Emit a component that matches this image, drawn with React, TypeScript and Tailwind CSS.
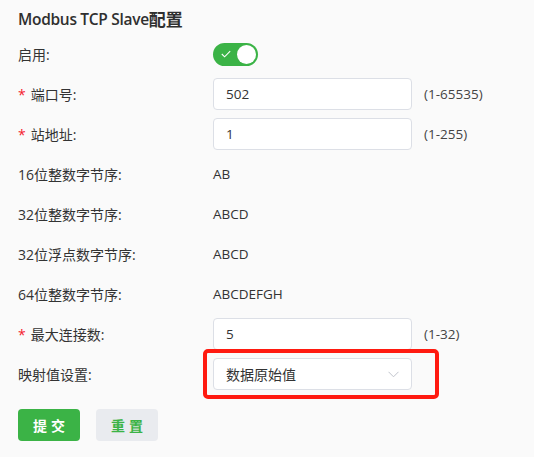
import React from "react";

const font = { fontFamily: '"Open Sans", "Noto Sans CJK SC", sans-serif' };

function Label({ text, required }: { text: string; required?: boolean }) {
  return (
    <div className="w-[195px] shrink-0 flex items-center text-[14px] text-[#333]">
      {required && <span className="text-[#f5222d] mr-[5px] text-[14px]">*</span>}
      <span>{text}</span>
    </div>
  );
}

function Row({ children }: { children: React.ReactNode }) {
  return <div className="h-[40px] flex items-center">{children}</div>;
}

function Input({ value }: { value: string }) {
  return (
    <div className="w-[199px] h-[32px] bg-white border border-[#dcdfe6] rounded-[4px] flex items-center pl-[12px] text-[13.5px] text-[#333]">
      {value}
    </div>
  );
}

export default function App() {
  return (
    <div className="w-[534px] h-[457px] bg-[#fafafa] pl-[18px] text-[#333]" style={font}>
      <div className="h-[34px] flex items-center pt-[5px] text-[15.5px] tracking-[-0.3px] font-semibold text-[#2f2f2f]">
        Modbus TCP Slave<span className="text-[17px] tracking-normal">配置</span>
      </div>
      <Row>
        <Label text="启用:" />
        <div className="w-[45px] h-[23px] rounded-full bg-[#3bb346] relative flex items-center">
          <svg className="ml-[8px]" width="10" height="8" viewBox="0 0 10 8" fill="none">
            <path d="M0.8 4L3.6 6.8L9.2 1.2" stroke="white" strokeWidth="1.1" />
          </svg>
          <div className="absolute right-[2px] top-[2px] w-[19px] h-[19px] rounded-full bg-white" />
        </div>
      </Row>
      <Row>
        <Label text="端口号:" required />
        <Input value="502" />
        <span className="ml-[12px] text-[13.5px] text-[#444]">(1-65535)</span>
      </Row>
      <Row>
        <Label text="站地址:" required />
        <Input value="1" />
        <span className="ml-[12px] text-[13.5px] text-[#444]">(1-255)</span>
      </Row>
      <Row>
        <Label text="16位整数字节序:" />
        <span className="text-[13.5px] text-[#333]">AB</span>
      </Row>
      <Row>
        <Label text="32位整数字节序:" />
        <span className="text-[13.5px] text-[#333]">ABCD</span>
      </Row>
      <Row>
        <Label text="32位浮点数字节序:" />
        <span className="text-[13.5px] text-[#333]">ABCD</span>
      </Row>
      <Row>
        <Label text="64位整数字节序:" />
        <span className="text-[13.5px] text-[#333]">ABCDEFGH</span>
      </Row>
      <Row>
        <Label text="最大连接数:" required />
        <Input value="5" />
        <span className="ml-[12px] text-[13.5px] text-[#444]">(1-32)</span>
      </Row>
      <Row>
        <Label text="映射值设置:" />
        <div className="relative">
          <div className="w-[199px] h-[32px] bg-white border border-[#dcdfe6] rounded-[4px] flex items-center justify-between pl-[12px] pr-[12px] text-[14px] text-[#333]">
            <span>数据原始值</span>
            <svg width="11" height="7" viewBox="0 0 11 7" fill="none">
              <path d="M0.5 0.8L5.5 5.8L10.5 0.8" stroke="#c0c4cc" strokeWidth="1" />
            </svg>
          </div>
          <div className="absolute left-[-10px] top-[-9px] w-[236px] h-[50px] border-[4px] border-[#ff1a10] rounded-[5px] pointer-events-none" />
        </div>
      </Row>
      <div className="flex gap-[16px] mt-[15px]">
        <button className="w-[62px] h-[32px] rounded-[4px] bg-[#3bb346] text-white text-[14px] font-bold tracking-[4px] pl-[4px]">
          提交
        </button>
        <button className="w-[62px] h-[32px] rounded-[4px] bg-[#e9ebef] text-[#3bb346] text-[14px] font-bold tracking-[4px] pl-[4px]">
          重置
        </button>
      </div>
    </div>
  );
}
